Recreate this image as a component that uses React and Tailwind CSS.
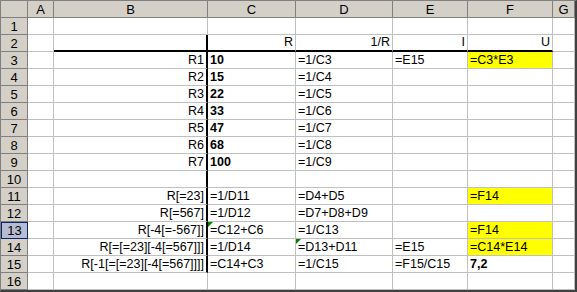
const COLS = ['A', 'B', 'C', 'D', 'E', 'F', 'G'];

// each row: [A, B, C, D, E, F, G]
const ROWS = [
    ['', '', '', '', '', '', ''],
    ['', '', 'R', '1/R', 'I', 'U', ''],
    ['', 'R1', '10', '=1/C3', '=E15', '=C3*E3', ''],
    ['', 'R2', '15', '=1/C4', '', '', ''],
    ['', 'R3', '22', '=1/C5', '', '', ''],
    ['', 'R4', '33', '=1/C6', '', '', ''],
    ['', 'R5', '47', '=1/C7', '', '', ''],
    ['', 'R6', '68', '=1/C8', '', '', ''],
    ['', 'R7', '100', '=1/C9', '', '', ''],
    ['', '', '', '', '', '', ''],
    ['', 'R[=23]', '=1/D11', '=D4+D5', '', '=F14', ''],
    ['', 'R[=567]', '=1/D12', '=D7+D8+D9', '', '', ''],
    ['', 'R[-4[=-567]]', '=C12+C6', '=1/C13', '', '=F14', ''],
    ['', 'R[=[=23][-4[=567]]]', '=1/D14', '=D13+D11', '=E15', '=C14*E14', ''],
    ['', 'R[-1[=[=23][-4[=567]]]]', '=C14+C3', '=1/C15', '=F15/C15', '7,2', ''],
    ['', '', '', '', '', '', ''],
];

const YELLOW = { '3-F': true, '11-F': true, '13-F': true, '14-F': true };
const TRIANGLE = { '13-C': true, '14-D': true };

function Cell({ row, col, value }) {
    const key = `${row}-${col}`;
    const rightAlign = col === 'B' || (row === 2 && value !== '');
    const bold = (col === 'C' && row >= 3 && row <= 9) || key === '15-F';
    const thickBottom = row === 2 && 'BCDEF'.includes(col);
    const thickRight = col === 'B' && row >= 2 && row <= 15;

    return (
        <div
            className={[
                'relative box-border h-[17px] overflow-visible whitespace-nowrap flex items-end leading-[14px] pb-[1px]',
                thickRight ? 'border-r-2 border-r-black' : 'border-r border-r-[#c0c0c0]',
                thickBottom ? 'border-b-2 border-b-black' : 'border-b border-b-[#c0c0c0]',
                YELLOW[key] ? 'bg-[#ffff00]' : 'bg-white',
                rightAlign ? 'justify-end pr-[2px]' : 'justify-start pl-[2px]',
                bold ? 'font-bold' : '',
            ].join(' ')}
        >
            {TRIANGLE[key] && (
                <span className="absolute left-0 top-0 w-0 h-0 border-t-[5px] border-t-[#008000] border-r-[5px] border-r-transparent" />
            )}
            {value}
        </div>
    );
}

export default function App() {
    return (
        <div
            className="w-[577px] h-[292px] box-border overflow-hidden bg-white text-black text-[12.5px] border-t border-l border-[#808080] border-r-2 border-b-2 border-r-[#404040] border-b-[#404040]"
            style={{ fontFamily: '"Liberation Sans", Arial, sans-serif' }}
        >
            <div className="grid grid-cols-[27px_26px_154px_88px_97px_75px_85px_22px]">
                {/* Column headers */}
                <div className="box-border h-[17px] bg-[#d4d0c8] border-r border-b border-[#808080]" />
                {COLS.map((c) => (
                    <div
                        key={c}
                        className="box-border h-[17px] bg-[#d4d0c8] border-r border-b border-[#808080] flex items-center justify-center text-[13px] leading-none"
                    >
                        {c}
                    </div>
                ))}

                {/* Rows */}
                {ROWS.map((cells, i) => {
                    const row = i + 1;
                    const active = row === 13;
                    return [
                        <div
                            key={`h${row}`}
                            className={[
                                'box-border h-[17px] flex items-center justify-center text-[13px] leading-none',
                                active
                                    ? 'bg-[#b6bdd2] border border-[#0a246a]'
                                    : 'bg-[#d4d0c8] border-r border-b border-[#808080]',
                            ].join(' ')}
                        >
                            {row}
                        </div>,
                        ...cells.map((v, j) => (
                            <Cell key={`${row}-${COLS[j]}`} row={row} col={COLS[j]} value={v} />
                        )),
                    ];
                })}
            </div>
        </div>
    );
}
